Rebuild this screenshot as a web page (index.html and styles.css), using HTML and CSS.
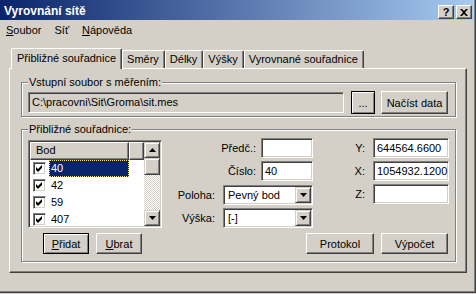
FILE: index.html
```html
<!DOCTYPE html>
<html lang="cs">
<head>
<meta charset="utf-8">
<title>Vyrovnání sítě</title>
<link rel="stylesheet" href="styles.css">
</head>
<body>
<div class="window">
  <div class="titlebar">
    <span class="title">Vyrovnání sítě</span>
    <div class="caption-btns">
      <span class="cbtn help">?</span>
      <span class="cbtn close"><svg width="8" height="7" viewBox="0 0 8 7"><path d="M0 0h2l2 2 2-2h2L5 3.5 8 7H6L4 5 2 7H0l3-3.5z" fill="#000"/></svg></span>
    </div>
  </div>
  <div class="menubar">
    <span class="menu"><u>S</u>oubor</span>
    <span class="menu">Síť</span>
    <span class="menu"><u>N</u>ápověda</span>
  </div>
  <div class="tabctl">
    <div class="tabstrip">
      <div class="tab active">Přibližné souřadnice</div>
      <div class="tab">Směry</div>
      <div class="tab">Délky</div>
      <div class="tab">Výšky</div>
      <div class="tab">Vyrovnané souřadnice</div>
    </div>
    <div class="panel">
      <div class="group g1">
        <div class="glabel">Vstupní soubor s měřením:</div>
        <div class="filerow">
          <div class="edit ro path">C:\pracovni\Sit\Groma\sit.mes</div>
          <button class="btn def dots">...</button>
          <button class="btn load">Načíst data</button>
        </div>
      </div>
      <div class="group g2">
        <div class="glabel">Přibližné souřadnice:</div>
        <div class="g2-top">
          <div class="listview">
            <div class="lv-main">
              <div class="lv-head"><div class="hcell hbod">Bod</div><div class="hcell hfill"></div></div>
              <div class="lv-row"><span class="chk"><svg width="9" height="9" viewBox="0 0 9 9"><polygon points="1,3 3,5 7,1 7,4 3,8 1,6" fill="#000"/></svg></span><span class="item sel">40</span></div>
              <div class="lv-row"><span class="chk"><svg width="9" height="9" viewBox="0 0 9 9"><polygon points="1,3 3,5 7,1 7,4 3,8 1,6" fill="#000"/></svg></span><span class="item">42</span></div>
              <div class="lv-row"><span class="chk"><svg width="9" height="9" viewBox="0 0 9 9"><polygon points="1,3 3,5 7,1 7,4 3,8 1,6" fill="#000"/></svg></span><span class="item">59</span></div>
              <div class="lv-row"><span class="chk"><svg width="9" height="9" viewBox="0 0 9 9"><polygon points="1,3 3,5 7,1 7,4 3,8 1,6" fill="#000"/></svg></span><span class="item">407</span></div>
            </div>
            <div class="vscroll">
              <div class="sbtn"><svg width="7" height="4" viewBox="0 0 7 4"><polygon points="3.5,0 7,4 0,4" fill="#000"/></svg></div>
              <div class="thumb"></div>
              <div class="track"></div>
              <div class="sbtn"><svg width="7" height="4" viewBox="0 0 7 4"><polygon points="0,0 7,0 3.5,4" fill="#000"/></svg></div>
            </div>
          </div>
          <div class="form mid">
            <div class="frow r1"><span class="lbl">Předč.:</span><div class="edit short"></div></div>
            <div class="frow r2"><span class="lbl">Číslo:</span><div class="edit short">40</div></div>
            <div class="frow r3 wide"><span class="lbl">Poloha:</span><div class="combo"><span class="ctext">Pevný bod</span><span class="dd"><svg width="7" height="4" viewBox="0 0 7 4"><polygon points="0,0 7,0 3.5,4" fill="#000"/></svg></span></div></div>
            <div class="frow r4 wide"><span class="lbl">Výška:</span><div class="combo"><span class="ctext">[-]</span><span class="dd"><svg width="7" height="4" viewBox="0 0 7 4"><polygon points="0,0 7,0 3.5,4" fill="#000"/></svg></span></div></div>
          </div>
          <div class="form right">
            <div class="frow r1"><span class="lbl">Y:</span><div class="edit coord">644564.6600</div></div>
            <div class="frow r2"><span class="lbl">X:</span><div class="edit coord">1054932.1200</div></div>
            <div class="frow r3b"><span class="lbl">Z:</span><div class="edit coord"></div></div>
          </div>
        </div>
        <div class="g2-bottom">
          <div class="btns left">
            <button class="btn def small"><u>P</u>řidat</button>
            <button class="btn small"><u>U</u>brat</button>
          </div>
          <div class="btns right">
            <button class="btn proto">Protokol</button>
            <button class="btn calc">Výpočet</button>
          </div>
        </div>
      </div>
    </div>
  </div>
</div>
</body>
</html>
```

FILE: styles.css
```css
* { box-sizing: border-box; }
html, body { margin: 0; padding: 0; }
body {
  background: #d4d0c8;
  font-family: "Liberation Sans", Arial, sans-serif;
  font-size: 11px;
  color: #000;
  width: 476px;
  height: 294px;
  overflow: hidden;
}
.window {
  width: 476px;
  height: 293px;
  border-right: 1px solid #404040;
  border-bottom: 1px solid #404040;
  box-shadow: inset -1px -1px 0 #808080;
  display: flex;
  flex-direction: column;
}
.titlebar {
  height: 20px;
  width: 473px;
  flex: none;
  background: linear-gradient(to right, #0a246a, #a6caf0);
  display: flex;
  justify-content: space-between;
  padding: 0 1px 0 4px;
}
.title {
  color: #fff;
  font-weight: bold;
  font-size: 12px;
  line-height: 20px;
  padding-top: 1px;
}
.caption-btns {
  display: flex;
  gap: 2px;
  padding-top: 5px;
}
.cbtn {
  width: 16px;
  height: 14px;
  background: #d4d0c8;
  border: 1px solid;
  border-color: #fff #404040 #404040 #fff;
  box-shadow: inset -1px -1px 0 #808080;
  display: flex;
  align-items: center;
  justify-content: center;
  font-weight: bold;
  font-size: 11px;
  line-height: 12px;
}
.menubar {
  height: 20px;
  flex: none;
  display: flex;
  line-height: 20px;
}
.menu { padding: 0 6px; }
.menu:nth-child(2) { padding: 0 7px 0 7px; }
.tabctl {
  margin: 8px 0 0 9px;
  width: 458px;
}
.tabstrip {
  height: 20px;
  display: flex;
  align-items: flex-end;
  padding-left: 2px;
}
.tab {
  height: 18px;
  line-height: 17px;
  padding: 0 5px 0 4px;
  border-left: 1px solid #fff;
  border-top: 1px solid #fff;
  border-right: 1px solid #404040;
  box-shadow: inset -1px 0 0 #808080;
  border-radius: 2px 2px 0 0;
  white-space: nowrap;
}
.tab.active {
  height: 21px;
  line-height: 18px;
  padding: 0 5px 0 5px;
  margin-bottom: -1px;
  position: relative;
  z-index: 2;
  background: #d4d0c8;
}
.panel {
  height: 205px;
  border-top: 1px solid #fff;
  border-left: 1px solid #fff;
  border-right: 1px solid #404040;
  border-bottom: 1px solid #404040;
  box-shadow: inset -1px -1px 0 #808080;
  padding: 13px 10px 0 11px;
}
.group {
  width: 435px;
  border: 1px solid #808080;
  box-shadow: inset 1px 1px 0 #fff, 1px 1px 0 #fff;
  display: flex;
  flex-direction: column;
  padding: 0 6px;
}
.glabel {
  align-self: flex-start;
  height: 13px;
  line-height: 13px;
  margin-top: -7px;
  padding: 0 1px;
  background: #d4d0c8;
}
.g1 { height: 35px; padding-bottom: 2px; }
.filerow {
  margin-top: 2px;
  height: 23px;
  display: flex;
  align-items: center;
}
.edit {
  height: 20px;
  background: #fff;
  border: 1px solid;
  border-color: #808080 #fff #fff #808080;
  box-shadow: inset 1px 1px 0 #404040, inset -1px -1px 0 #d4d0c8;
  padding: 0 3px;
  line-height: 18px;
  white-space: nowrap;
  overflow: hidden;
}
.edit.ro { background: #d4d0c8; }
.edit.path { width: 316px; height: 21px; line-height: 19px; }
.btn {
  font: inherit;
  color: #000;
  background: #d4d0c8;
  border: 1px solid;
  border-color: #fff #404040 #404040 #fff;
  box-shadow: inset -1px -1px 0 #808080;
  padding: 0;
  margin: 0;
  height: 21px;
  display: flex;
  align-items: center;
  justify-content: center;
}
.btn.def {
  border-color: #000;
  box-shadow: inset 1px 1px 0 #fff, inset -1px -1px 0 #808080;
}
.btn.dots { width: 24px; height: 23px; margin-left: 7px; }
.btn.load { width: 67px; height: 23px; margin-left: 6px; }
.g2 { height: 133px; margin-top: 12px; padding-bottom: 7px; }
.g2-top { display: flex; align-items: flex-start; height: 92px; }
.listview {
  margin-top: 4px;
  width: 134px;
  height: 88px;
  border: 1px solid;
  border-color: #808080 #fff #fff #808080;
  box-shadow: inset 1px 1px 0 #404040, inset -1px -1px 0 #d4d0c8;
  padding: 1px;
  display: flex;
  background: #fff;
}
.lv-main { flex: 1; overflow: hidden; }
.lv-head { display: flex; height: 18px; }
.hcell {
  height: 18px;
  background: #d4d0c8;
  border-top: 1px solid #fff;
  border-left: 1px solid #fff;
  border-right: 1px solid #404040;
  border-bottom: 1px solid #404040;
  box-shadow: inset -1px -1px 0 #808080;
  line-height: 15px;
}
.hbod { width: 99px; padding-left: 5px; }
.hfill { flex: 1; }
.lv-row {
  height: 17px;
  display: flex;
  align-items: center;
  padding-left: 3px;
}
.chk {
  width: 13px;
  height: 13px;
  border: 1px solid;
  border-color: #808080 #fff #fff #808080;
  box-shadow: inset 1px 1px 0 #404040, inset -1px -1px 0 #d4d0c8;
  background: #fff;
  padding: 1px;
  display: flex;
}
.chk svg { display: block; }
.item {
  margin-left: 3px;
  width: 80px;
  height: 17px;
  line-height: 15px;
  padding-left: 1px;
  border: 1px solid transparent;
}
.item.sel {
  background: #0a246a;
  color: #fff;
  border: 1px dotted #f5db95;
}
.vscroll {
  width: 16px;
  display: flex;
  flex-direction: column;
}
.sbtn, .thumb {
  background: #d4d0c8;
  border: 1px solid;
  border-color: #d4d0c8 #404040 #404040 #d4d0c8;
  box-shadow: inset 1px 1px 0 #fff, inset -1px -1px 0 #808080;
}
.sbtn {
  height: 16px;
  display: flex;
  align-items: center;
  justify-content: center;
}
.thumb { height: 17px; }
.track {
  flex: 1;
  background: repeating-conic-gradient(#d4d0c8 0 25%, #fff 0 50%) 0 0 / 2px 2px;
}
.form { display: flex; flex-direction: column; }
.form.mid { width: 151px; }
.form.right { flex: 1; }
.frow {
  display: flex;
  justify-content: flex-end;
  align-items: center;
  gap: 5px;
  height: 20px;
}
.frow.r1 { margin-top: 2px; }
.frow.r2 { margin-top: 3px; }
.frow.r3 { margin-top: 4px; }
.frow.r4 { margin-top: 3px; }
.frow.r3b { margin-top: 3px; }
.frow.wide { gap: 8px; }
.form.right .frow { gap: 8px; }
.edit.short { width: 52px; }
.edit.coord { width: 76px; }
.combo {
  width: 90px;
  height: 20px;
  background: #fff;
  border: 1px solid;
  border-color: #808080 #fff #fff #808080;
  box-shadow: inset 1px 1px 0 #404040, inset -1px -1px 0 #d4d0c8;
  padding: 1px;
  display: flex;
}
.ctext { flex: 1; line-height: 16px; padding-left: 3px; }
.dd {
  width: 16px;
  height: 16px;
  background: #d4d0c8;
  border: 1px solid;
  border-color: #d4d0c8 #404040 #404040 #d4d0c8;
  box-shadow: inset 1px 1px 0 #fff, inset -1px -1px 0 #808080;
  display: flex;
  align-items: center;
  justify-content: center;
}
.g2-bottom {
  margin-top: 5px;
  display: flex;
  justify-content: space-between;
}
.btns { display: flex; gap: 7px; }
.btns.left { margin-left: 15px; }
.btns.right { margin-right: 1px; }
.btn.small { width: 46px; }
.btn.proto { width: 68px; }
.btn.calc { width: 67px; }
```
